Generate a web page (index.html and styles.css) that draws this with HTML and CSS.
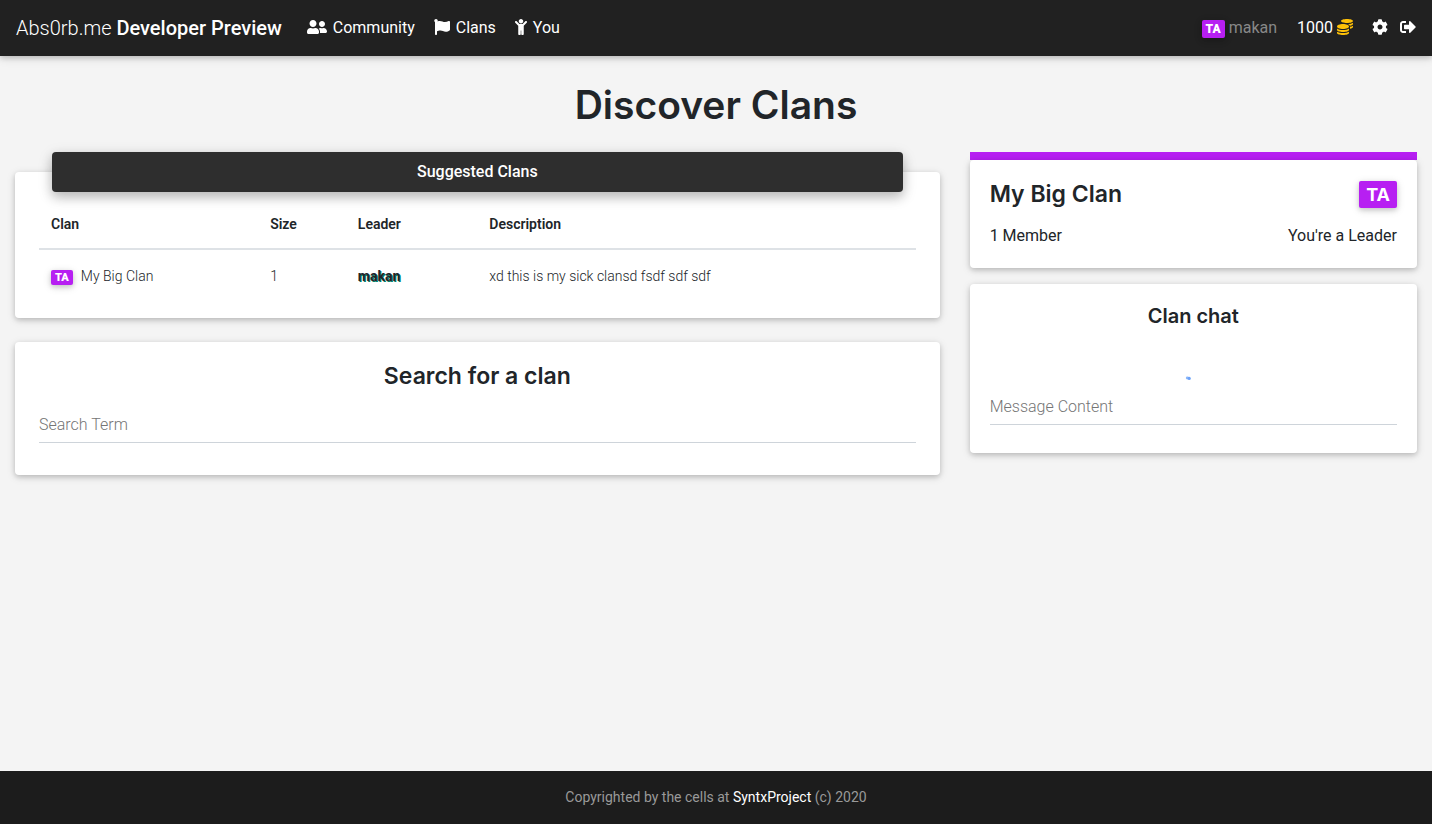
FILE: index.html
```html
<!DOCTYPE html>
<html lang="en">
<head>
<meta charset="utf-8">
<meta name="viewport" content="width=device-width, initial-scale=1">
<title>Discover Clans</title>
<link rel="stylesheet" href="styles.css">
</head>
<body>
<header class="navbar">
  <a class="brand" href="#">Abs0rb.me <strong>Developer Preview</strong></a>
  <nav class="nav-links">
    <a href="#"><svg class="icon icon-wide" viewBox="0 0 640 512" aria-hidden="true"><path d="M192 256c61.9 0 112-50.1 112-112S253.9 32 192 32 80 82.1 80 144s50.1 112 112 112zm76.8 32h-8.3c-20.8 10-43.9 16-68.5 16s-47.6-6-68.5-16h-8.3C51.6 288 0 339.6 0 403.2V432c0 26.5 21.5 48 48 48h288c26.5 0 48-21.5 48-48v-28.8c0-63.6-51.6-115.2-115.2-115.2zM480 256c53 0 96-43 96-96s-43-96-96-96-96 43-96 96 43 96 96 96zm48 32h-3.8c-13.9 4.8-28.6 8-44.2 8s-30.3-3.2-44.2-8H432c-20.4 0-39.2 5.9-55.7 15.4 24.4 26.3 39.7 61.2 39.7 99.8v38.4c0 2.2-.5 4.3-.6 6.4H592c26.5 0 48-21.5 48-48 0-61.9-50.1-112-112-112z"/></svg>Community</a>
    <a href="#"><svg class="icon" viewBox="0 0 512 512" aria-hidden="true"><path d="M349.565 98.783C295.978 98.783 251.721 64 184.348 64c-24.955 0-47.309 4.384-68.045 12.013a55.947 55.947 0 0 0 3.586-23.562C118.117 24.015 94.806 1.206 66.338.048 34.345-1.254 8 24.296 8 56c0 19.026 9.497 35.825 24 45.945V488c0 13.255 10.745 24 24 24h16c13.255 0 24-10.745 24-24v-94.4c28.311-12.064 63.582-22.122 114.435-22.122 53.588 0 97.844 34.783 165.217 34.783 48.169 0 86.667-16.294 122.505-40.858C506.84 359.452 512 349.571 512 339.045v-243.1c0-23.393-24.269-38.87-45.485-29.016-34.338 15.948-76.454 31.854-116.95 31.854z"/></svg>Clans</a>
    <a href="#"><svg class="icon icon-narrow" viewBox="0 0 384 512" aria-hidden="true"><path d="M120 72c0-39.765 32.235-72 72-72s72 32.235 72 72c0 39.764-32.235 72-72 72s-72-32.236-72-72zm254.627 1.373c-12.496-12.497-32.758-12.497-45.254 0L242.745 160H141.254L54.627 73.373c-12.496-12.497-32.758-12.497-45.254 0-12.497 12.497-12.497 32.758 0 45.255L104 213.254V480c0 17.673 14.327 32 32 32h16c17.673 0 32-14.327 32-32V368h16v112c0 17.673 14.327 32 32 32h16c17.673 0 32-14.327 32-32V213.254l94.627-94.627c12.497-12.497 12.497-32.757 0-45.254z"/></svg>You</a>
  </nav>
  <div class="nav-user">
    <a class="user" href="#"><span class="badge badge-nav">TA</span>makan</a>
    <a class="coins" href="#">1000<svg class="icon" viewBox="0 0 512 512" aria-hidden="true"><path d="M0 405.3V448c0 35.3 86 64 192 64s192-28.7 192-64v-42.7C342.7 434.4 267.2 448 192 448S41.3 434.4 0 405.3zM320 128c106 0 192-28.7 192-64S426 0 320 0 128 28.7 128 64s86 64 192 64zM0 300.4V352c0 35.3 86 64 192 64s192-28.7 192-64v-51.6c-41.3 34-116.9 51.6-192 51.6S41.3 334.4 0 300.4zm416 11c57.3-11.1 96-31.7 96-55.4v-42.7c-23.2 16.4-57.3 27.6-96 34.5v63.6zM192 160C86 160 0 195.8 0 240s86 80 192 80 192-35.8 192-80-86-80-192-80zm219.3 56.3c60-10.8 100.7-32 100.7-56.3v-42.7c-35.5 25.1-96.5 38.6-160.7 41.8 29.5 14.3 51.2 33.5 60 57.2z"/></svg></a>
    <a class="tool" href="#" aria-label="Settings"><svg class="icon" viewBox="0 0 512 512" aria-hidden="true"><path d="M487.4 315.7l-42.6-24.6c4.3-23.2 4.3-47 0-70.2l42.6-24.6c4.9-2.8 7.1-8.6 5.5-14-11.1-35.6-30-67.8-54.7-94.6-3.8-4.1-10-5.1-14.8-2.3L380.8 110c-17.9-15.4-38.5-27.3-60.8-35.1V25.8c0-5.6-3.9-10.5-9.4-11.7-36.7-8.2-74.3-7.8-109.2 0-5.5 1.2-9.4 6.1-9.4 11.7V75c-22.2 7.9-42.8 19.8-60.8 35.1L88.7 85.5c-4.9-2.8-11-1.9-14.8 2.3-24.7 26.7-43.6 58.9-54.7 94.6-1.7 5.4.6 11.2 5.5 14L67.3 221c-4.3 23.2-4.3 47 0 70.2l-42.6 24.6c-4.9 2.8-7.1 8.6-5.5 14 11.1 35.6 30 67.8 54.7 94.6 3.8 4.1 10 5.1 14.8 2.3l42.6-24.6c17.9 15.4 38.5 27.3 60.8 35.1v49.2c0 5.6 3.9 10.5 9.4 11.7 36.7 8.2 74.3 7.8 109.2 0 5.5-1.2 9.4-6.1 9.4-11.7v-49.2c22.2-7.9 42.8-19.8 60.8-35.1l42.6 24.6c4.9 2.8 11 1.9 14.8-2.3 24.7-26.7 43.6-58.9 54.7-94.6 1.5-5.5-.7-11.3-5.6-14.1zM256 336c-44.1 0-80-35.9-80-80s35.9-80 80-80 80 35.9 80 80-35.9 80-80 80z"/></svg></a>
    <a class="tool" href="#" aria-label="Sign out"><svg class="icon" viewBox="0 0 512 512" aria-hidden="true"><path d="M497 273L329 441c-15 15-41 4.5-41-17v-96H152c-13.3 0-24-10.7-24-24v-96c0-13.3 10.7-24 24-24h136V88c0-21.4 25.9-32 41-17l168 168c9.3 9.4 9.3 24.6 0 34zM192 436v-40c0-6.6-5.4-12-12-12H96c-17.7 0-32-14.3-32-32V160c0-17.7 14.3-32 32-32h84c6.6 0 12-5.4 12-12V76c0-6.6-5.4-12-12-12H96c-53 0-96 43-96 96v192c0 53 43 96 96 96h84c6.6 0 12-5.4 12-12z"/></svg></a>
  </div>
</header>

<main class="page">
  <h1>Discover Clans</h1>
  <div class="row">
    <div class="col-main">
      <section class="card card-table">
        <h2 class="card-banner">Suggested Clans</h2>
        <table class="clans">
          <thead>
            <tr><th class="w-clan">Clan</th><th class="w-size">Size</th><th class="w-leader">Leader</th><th>Description</th></tr>
          </thead>
          <tbody>
            <tr>
              <td><span class="badge badge-table">TA</span>My Big Clan</td>
              <td>1</td>
              <td><strong class="leader">makan</strong></td>
              <td>xd this is my sick clansd fsdf sdf sdf</td>
            </tr>
          </tbody>
        </table>
      </section>
      <section class="card card-search">
        <h2 class="title">Search for a clan</h2>
        <input class="field" type="text" placeholder="Search Term" aria-label="Search Term">
      </section>
    </div>
    <aside class="col-side">
      <div class="clan-stripe"></div>
      <section class="card card-clan">
        <div class="split">
          <h2 class="title">My Big Clan</h2>
          <span class="badge badge-large">TA</span>
        </div>
        <div class="split">
          <span>1 Member</span>
          <span>You're a Leader</span>
        </div>
      </section>
      <section class="card card-chat">
        <h3 class="subtitle">Clan chat</h3>
        <svg class="loader" viewBox="0 0 16 16" role="img" aria-label="Loading"><ellipse cx="2.4" cy="8" rx="1.6" ry="1.4" fill="#8db8fa"/><ellipse cx="4.2" cy="8.4" rx="1.6" ry="1.6" fill="#6ca2f8"/></svg>
        <input class="field" type="text" placeholder="Message Content" aria-label="Message Content">
      </section>
    </aside>
  </div>
</main>

<footer class="footer">Copyrighted by the cells at <a href="#">SyntxProject</a> (c) 2020</footer>
</body>
</html>
```
FILE: styles.css
```css
*, *::before, *::after { box-sizing: border-box; }

body {
  margin: 0;
  min-height: 100vh;
  display: flex;
  flex-direction: column;
  background: #f4f4f4;
  color: #212529;
  font-family: Roboto, sans-serif;
  font-size: 16px;
  font-weight: 300;
  line-height: 24px;
}

a { color: inherit; text-decoration: none; }
h1, h2, h3 { margin: 0; font-family: Inter, sans-serif; font-weight: 600; }

.icon { width: 16px; height: 16px; fill: currentColor; flex: none; }
.icon-wide { width: 20px; }
.icon-narrow { width: 12px; }

.navbar {
  display: flex;
  align-items: center;
  height: 56px;
  padding: 0 16px;
  background: #212121;
  color: #fff;
  box-shadow: 0 2px 5px rgba(0, 0, 0, .16), 0 2px 10px rgba(0, 0, 0, .12);
}
.navbar .icon { margin-bottom: 2px; }
.brand { font-size: 20px; margin-right: 25px; }
.brand strong { font-weight: 500; }
.nav-links { display: flex; gap: 19px; }
.nav-links a { display: flex; align-items: center; gap: 6px; font-weight: 400; }
.nav-user { display: flex; align-items: center; margin-left: auto; font-weight: 400; }
.user { display: flex; align-items: center; gap: 4px; color: #888; margin-right: 20px; }
.coins { display: flex; align-items: center; gap: 4px; margin-right: 19px; }
.coins .icon { color: #ffc107; }
.tool { display: flex; }
.tool + .tool { margin-left: 12px; }

.badge {
  display: inline-block;
  border-radius: 2px;
  background: #b71ff2;
  color: #fff;
  font-weight: 900;
  text-align: center;
  box-shadow: 0 2px 5px rgba(0, 0, 0, .16), 0 2px 10px rgba(0, 0, 0, .12);
}
.badge-nav { font-size: 12px; line-height: 18px; padding: 0 4px; margin-top: 2px; }
.badge-table { font-size: 11px; line-height: 15px; padding: 0 4px; margin-right: 8px; }
.badge-large { font-family: Inter, sans-serif; font-size: 18px; font-weight: 700; line-height: 27px; padding: 0 7px; }

.page { flex: 1; }
h1 { padding-top: 25px; margin-bottom: 23px; font-size: 39px; line-height: 48px; text-align: center; }

.row { display: flex; }
.col-main, .col-side { padding: 0 15px; }
.col-main { width: 66.6667%; }
.col-side { width: 33.3333%; }

.card {
  border-radius: 4px;
  background: #fff;
  box-shadow: 0 2px 5px rgba(0, 0, 0, .16), 0 2px 10px rgba(0, 0, 0, .12);
}
.card-table { margin-top: 20px; padding: 0 24px 16px; margin-bottom: 24px; display: flow-root; }
.card-banner {
  margin: -20px 13px 7px;
  border-radius: 4px;
  background: #2e2e2e;
  color: #fff;
  font-family: Roboto, sans-serif;
  font-size: 16px;
  font-weight: 500;
  line-height: 40px;
  text-align: center;
  box-shadow: 0 5px 11px rgba(0, 0, 0, .18), 0 4px 15px rgba(0, 0, 0, .15);
}
.clans { width: 100%; table-layout: fixed; border-collapse: collapse; font-size: 14px; line-height: 20px; text-align: left; }
.clans th { padding: 14px 12px; font-weight: 600; border-bottom: 2px solid #dee2e6; height: 50px; }
.clans td { padding: 16px 12px; }
.w-clan { width: 25%; }
.w-size { width: 10%; }
.w-leader { width: 15%; }
.leader { font-weight: 700; text-shadow: 1px 1px 0 #007f68; }

.card-search { padding: 20px 24px 32px; }
.title { font-size: 23px; line-height: 29px; }
.card-search .title { margin-bottom: 16px; text-align: center; }

.field {
  display: block;
  width: 100%;
  height: 36px;
  padding: 0;
  border: 0;
  border-bottom: 1px solid #ced4da;
  background: transparent;
  color: #495057;
  font: inherit;
}
.field::placeholder { color: #757575; opacity: 1; }

.clan-stripe { height: 8px; background: #b71ff2; }
.card-clan { padding: 20px; margin-bottom: 16px; font-weight: 400; }
.split { display: flex; justify-content: space-between; align-items: center; }
.split + .split { margin-top: 15px; }
.card-chat { padding: 20px 20px 28px; }
.subtitle { font-size: 20px; line-height: 24px; text-align: center; }
.loader { display: block; width: 16px; height: 16px; margin: 42px auto 3px; }

.footer {
  padding: 16px;
  background: #1c1c1c;
  color: #999;
  font-size: 14px;
  font-weight: 400;
  line-height: 21px;
  text-align: center;
}
.footer a { color: #fff; }
```
